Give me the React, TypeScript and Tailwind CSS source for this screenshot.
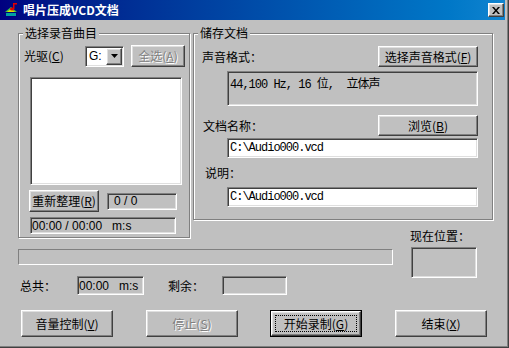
import React from "react";

const raised =
  "border border-t-white border-l-white border-b-[#404040] border-r-[#404040] shadow-[inset_-1px_-1px_0_#808080,inset_1px_1px_0_#dfdfdf] bg-[#c0c0c0]";
const sunken =
  "border border-t-[#808080] border-l-[#808080] border-b-white border-r-white shadow-[inset_1px_1px_0_#404040,inset_-1px_-1px_0_#dfdfdf]";
const disabledText = "text-[#808080] [text-shadow:1px_1px_0_#fff]";
const mono = "font-['Liberation_Mono','Noto_Sans_CJK_SC',monospace] text-[12px] tracking-[-1px] leading-[12px]";
const sans = "font-['Liberation_Sans','Noto_Sans_CJK_SC',sans-serif] text-[12px] leading-[12px]";

function Btn({
  w,
  h,
  children,
  disabled,
  def,
}: {
  w: string;
  h: string;
  children: React.ReactNode;
  disabled?: boolean;
  def?: boolean;
}) {
  if (def) {
    return (
      <div className={`${w} ${h} border border-black flex shrink-0`}>
        <div className={`flex-1 ${raised} flex items-center justify-center relative`}>
          <div className="absolute inset-[3px] border border-dotted border-black" />
          <span className="leading-[12px]">{children}</span>
        </div>
      </div>
    );
  }
  return (
    <div className={`${w} ${h} ${raised} flex items-center justify-center shrink-0 ${disabled ? disabledText : ""}`}>
      <span className="leading-[12px]">{children}</span>
    </div>
  );
}

function Group({
  title,
  className,
  children,
}: {
  title: string;
  className: string;
  children: React.ReactNode;
}) {
  return (
    <div
      className={`relative border border-[#808080] shadow-[inset_1px_1px_0_#fff,1px_1px_0_#fff] flex flex-col shrink-0 ${className}`}
    >
      <span className="absolute left-[4px] -top-[7px] px-[2px] bg-[#c0c0c0] leading-[12px]">{title}</span>
      {children}
    </div>
  );
}

function AppIcon() {
  return (
    <svg width="16" height="16" viewBox="0 0 16 16" className="shrink-0">
      <rect x="1" y="10" width="12" height="5" fill="#000080" />
      <rect x="2" y="11" width="10" height="3" fill="#00a0a0" />
      <polygon points="1,10 7,5 13,10" fill="#40c040" />
      <polygon points="3,10 7,7 11,10" fill="#e0e000" />
      <rect x="9" y="1" width="1.5" height="6" fill="#e00000" />
      <rect x="9" y="1" width="4" height="1.5" fill="#e00000" />
      <ellipse cx="8" cy="7" rx="2" ry="1.5" fill="#e00000" />
    </svg>
  );
}

export default function App() {
  return (
    <div className="w-[509px] h-[348px] bg-[#c0c0c0] flex flex-col overflow-hidden border-r border-b border-[#404040] shadow-[inset_-1px_-1px_0_#808080] font-['Noto_Sans_CJK_SC',sans-serif] text-[12px] leading-[12px] text-black">
      {/* Title bar */}
      <div className="h-[20px] w-[505px] flex items-center bg-linear-to-r from-[#000080] to-[#1084d0] shrink-0">
        <div className="ml-[4px]">
          <AppIcon />
        </div>
        <span className="ml-[3px] text-white font-bold leading-[12px]">唱片压成VCD文档</span>
        <div className={`ml-auto mr-[1px] w-[16px] h-[14px] ${raised} flex items-center justify-center`}>
          <svg width="8" height="7" viewBox="0 0 8 7">
            <path d="M0 0h2l2 2.5L6 0h2L5 3.5 8 7H6L4 4.5 2 7H0l3-3.5z" fill="#000" />
          </svg>
        </div>
      </div>

      <div className="flex flex-col pl-[18px]">
        {/* Top row */}
        <div className="mt-[13px] flex items-start">
          <Group title="选择录音曲目" className="w-[172px] h-[205px]">
            <div className="mt-[11px] flex items-center h-[22px]">
              <span className="ml-[5px] w-[61px]">
                光驱(<u>C</u>)
              </span>
              <div className={`w-[39px] h-[21px] ${sunken} bg-white flex items-center`}>
                <span className={`${sans} ml-[3px]`}>G:</span>
                <div className={`ml-auto mr-[1px] w-[16px] h-[17px] ${raised} flex items-center justify-center`}>
                  <svg width="7" height="4" viewBox="0 0 7 4">
                    <path d="M0 0h7L3.5 4z" fill="#000" />
                  </svg>
                </div>
              </div>
              <div className="ml-[7px]">
                <Btn w="w-[54px]" h="h-[22px]" disabled>
                  全选(<u>A</u>)
                </Btn>
              </div>
            </div>
            <div className={`mt-[10px] ml-[11px] w-[152px] h-[108px] ${sunken} bg-white`} />
            <div className="mt-[5px] ml-[10px] flex items-center h-[22px]">
              <Btn w="w-[70px]" h="h-[22px]">
                重新整理(<u>R</u>)
              </Btn>
              <div className={`ml-[8px] w-[70px] h-[17px] ${sunken} flex items-center`}>
                <span className={`${sans} ml-[6px] whitespace-pre`}>0 / 0</span>
              </div>
            </div>
            <div className={`mt-[5px] ml-[11px] w-[146px] h-[17px] ${sunken} flex items-center`}>
              <span className={`${sans} ml-[1px] whitespace-pre`}>00:00 / 00:00   m:s</span>
            </div>
          </Group>

          <div className="ml-[3px] flex flex-col">
            <Group title="储存文档" className="w-[300px] h-[187px]">
              <div className="mt-[12px] flex items-center justify-between h-[21px] pl-[8px] pr-[14px]">
                <span>声音格式：</span>
                <Btn w="w-[100px]" h="h-[21px]">
                  选择声音格式(<u>F</u>)
                </Btn>
              </div>
              <div className={`mt-[4px] ml-[33px] w-[251px] h-[35px] ${sunken} pl-[2px] pt-[5px]`}>
                <span className={`${mono} whitespace-pre`}>44,100 Hz, 16 位,  立体声</span>
              </div>
              <div className="mt-[9px] flex items-center justify-between h-[21px] pl-[9px] pr-[14px]">
                <span>文档名称：</span>
                <Btn w="w-[100px]" h="h-[21px]">
                  浏览(<u>B</u>)
                </Btn>
              </div>
              <div className={`mt-[2px] ml-[33px] w-[251px] h-[20px] ${sunken} bg-white flex items-center pl-[2px]`}>
                <span className={mono}>C:\Audio000.vcd</span>
              </div>
              <span className="mt-[9px] ml-[11px] h-[12px]">说明：</span>
              <div className={`mt-[8px] ml-[33px] w-[251px] h-[20px] ${sunken} bg-white flex items-center pl-[2px]`}>
                <span className={mono}>C:\Audio000.vcd</span>
              </div>
            </Group>
            <span className="mt-[10px] ml-[217px] h-[12px]">现在位置：</span>
          </div>
        </div>

        {/* Middle row */}
        <div className="mt-[5px] flex items-start">
          <div className="flex flex-col">
            <div className="mt-[2px] w-[375px] h-[16px] border border-t-[#808080] border-l-[#808080] border-b-white border-r-white" />
            <div className="mt-[11px] flex items-center h-[19px]">
              <span className="ml-[2px] w-[57px]">总共：</span>
              <div className={`w-[67px] h-[19px] ${sunken} flex items-center`}>
                <span className={`${sans} ml-[1px] whitespace-pre`}>00:00   m:s</span>
              </div>
              <span className="ml-[24px] w-[54px]">剩余：</span>
              <div className={`w-[65px] h-[19px] ${sunken}`} />
            </div>
          </div>
          <div className={`ml-[18px] w-[66px] h-[31px] ${sunken}`} />
        </div>

        {/* Buttons */}
        <div className="mt-[15px] ml-[3px] flex items-center">
          <Btn w="w-[92px]" h="h-[27px]">
            音量控制(<u>V</u>)
          </Btn>
          <div className="ml-[33px]">
            <Btn w="w-[92px]" h="h-[27px]" disabled>
              停止(<u>S</u>)
            </Btn>
          </div>
          <div className="ml-[32px]">
            <Btn w="w-[92px]" h="h-[27px]" def>
              开始录制(<u>G</u>)
            </Btn>
          </div>
          <div className="ml-[33px]">
            <Btn w="w-[92px]" h="h-[27px]">
              结束(<u>X</u>)
            </Btn>
          </div>
        </div>
      </div>
    </div>
  );
}
